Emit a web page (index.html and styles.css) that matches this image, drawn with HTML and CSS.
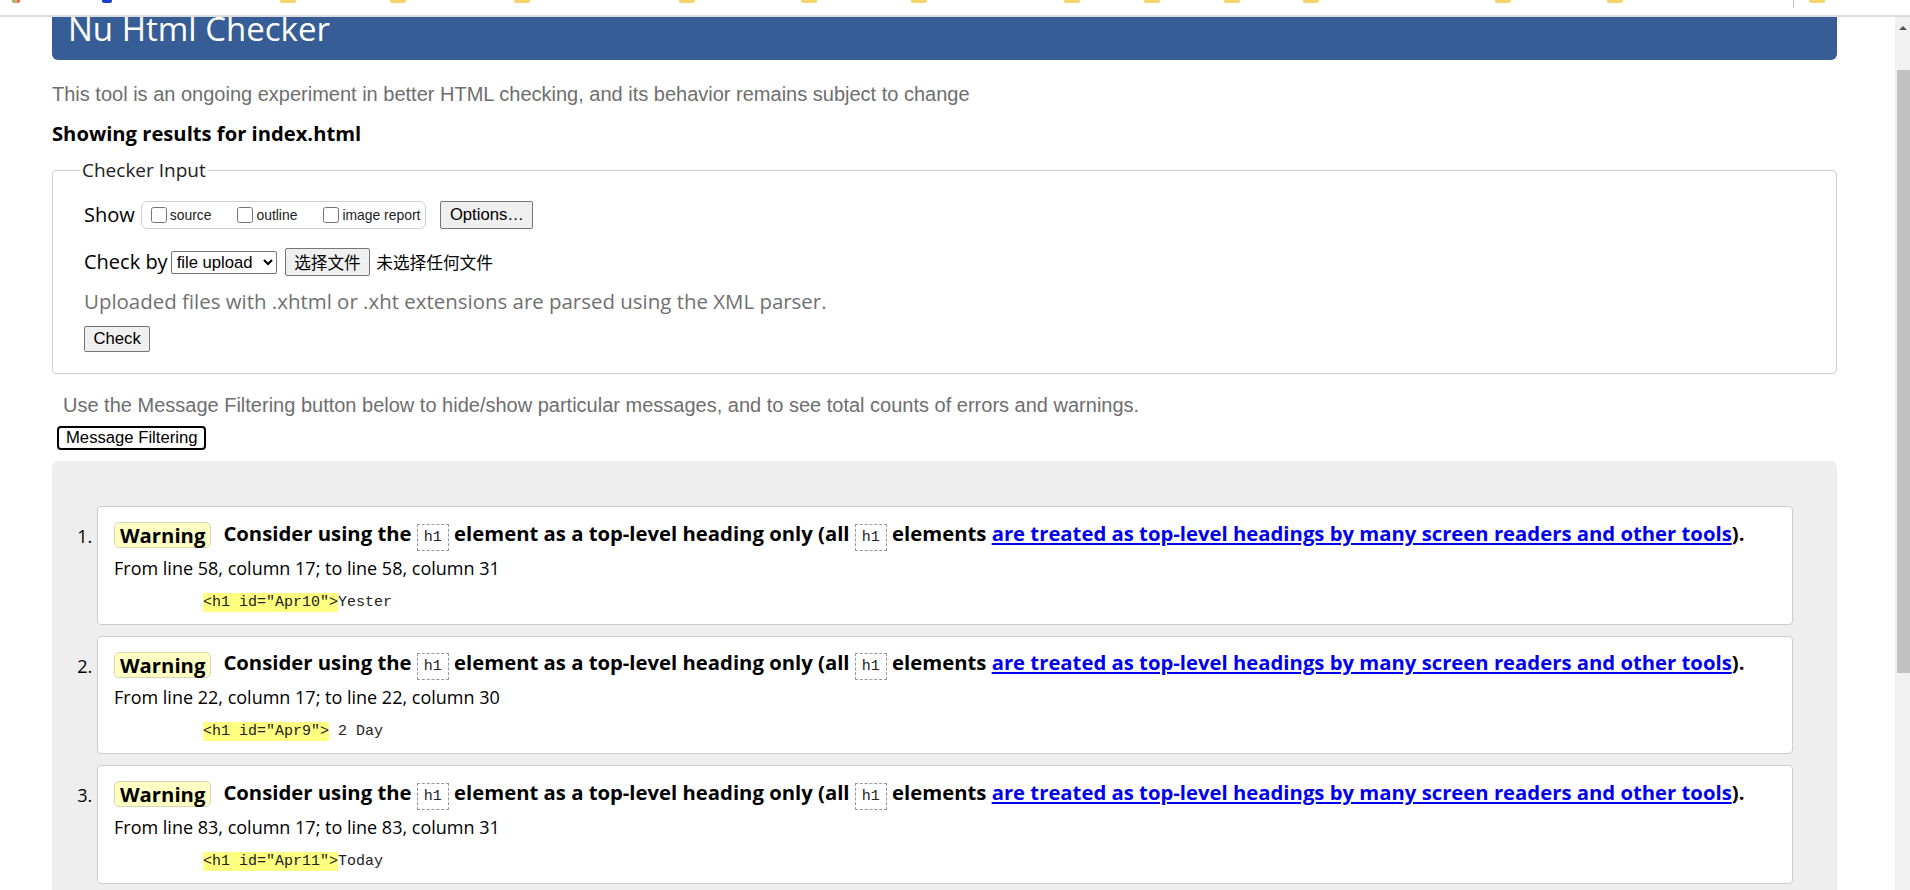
FILE: index.html
```html
<!DOCTYPE html>
<html lang="en">
<head>
<meta charset="utf-8">
<title>Nu Html Checker</title>
<link rel="stylesheet" href="styles.css">
</head>
<body>
<div class="topbar">
  <span class="mark multi" style="margin-left:12px"></span>
  <span class="mark blue" style="margin-left:82px"></span>
  <span class="mark" style="margin-left:168px"></span>
  <span class="mark" style="margin-left:94px"></span>
  <span class="mark" style="margin-left:108px"></span>
  <span class="mark" style="margin-left:149px"></span>
  <span class="mark" style="margin-left:106px"></span>
  <span class="mark" style="margin-left:94px"></span>
  <span class="mark" style="margin-left:137px"></span>
  <span class="mark" style="margin-left:64px"></span>
  <span class="mark" style="margin-left:64px"></span>
  <span class="mark" style="margin-left:63px"></span>
  <span class="mark" style="margin-left:176px"></span>
  <span class="mark" style="margin-left:96px"></span>
  <span class="sep" style="margin-left:170px"></span>
  <span class="mark" style="margin-left:15px"></span>
</div>
<div class="window">
  <div class="viewport">
    <div class="page">
      <h1 class="title">Nu Html Checker</h1>
      <p class="about">This tool is an ongoing experiment in better HTML checking, and its behavior remains subject to change</p>
      <p class="showing">Showing results for index.html</p>
      <fieldset class="checker">
        <legend class="legend">Checker Input</legend>
        <div class="row show-row">
          <span class="label">Show</span>
          <span class="opts">
            <label class="opt"><input type="checkbox">source</label>
            <label class="opt"><input type="checkbox">outline</label>
            <label class="opt"><input type="checkbox">image report</label>
          </span>
          <button class="btn btn-options" type="button">Options…</button>
        </div>
        <div class="row by-row">
          <span class="label">Check by</span>
          <select class="sel"><option>file upload</option></select>
          <button class="btn btn-file" type="button">选择文件</button>
          <span class="nofile">未选择任何文件</span>
        </div>
        <p class="hint">Uploaded files with .xhtml or .xht extensions are parsed using the XML parser.</p>
        <button class="btn btn-check" type="button">Check</button>
      </fieldset>
      <p class="filter-note">Use the Message Filtering button below to hide/show particular messages, and to see total counts of errors and warnings.</p>
      <button class="btn btn-filter" type="button">Message Filtering</button>
      <div class="results">
        <ol class="messages">
          <li class="msg">
            <p class="msg-title"><span class="badge">Warning</span><span class="msg-text">Consider using the <code class="kw">h1</code> element as a top-level heading only (all <code class="kw">h1</code> elements <a href="#" class="link">are treated as top-level headings by many screen readers and other tools</a>).</span></p>
            <p class="loc">From line 58, column 17; to line 58, column 31</p>
            <p class="extract"><code><mark class="hl">&lt;h1 id="Apr10"&gt;</mark>Yester</code></p>
          </li>
          <li class="msg">
            <p class="msg-title"><span class="badge">Warning</span><span class="msg-text">Consider using the <code class="kw">h1</code> element as a top-level heading only (all <code class="kw">h1</code> elements <a href="#" class="link">are treated as top-level headings by many screen readers and other tools</a>).</span></p>
            <p class="loc">From line 22, column 17; to line 22, column 30</p>
            <p class="extract"><code><mark class="hl">&lt;h1 id="Apr9"&gt;</mark> 2 Day</code></p>
          </li>
          <li class="msg">
            <p class="msg-title"><span class="badge">Warning</span><span class="msg-text">Consider using the <code class="kw">h1</code> element as a top-level heading only (all <code class="kw">h1</code> elements <a href="#" class="link">are treated as top-level headings by many screen readers and other tools</a>).</span></p>
            <p class="loc">From line 83, column 17; to line 83, column 31</p>
            <p class="extract"><code><mark class="hl">&lt;h1 id="Apr11"&gt;</mark>Today</code></p>
          </li>
        </ol>
      </div>
    </div>
  </div>
  <div class="scrollbar">
    <div class="sb-arrow"></div>
    <div class="sb-track"><div class="sb-thumb"></div></div>
  </div>
</div>
</body>
</html>
```
FILE: styles.css
```css
* { box-sizing: border-box; }
html, body { margin: 0; padding: 0; height: 100%; background: #fff; overflow: hidden; }
body {
  font-family: "Open Sans", "Noto Sans", "Noto Sans CJK SC", sans-serif;
  color: #000;
  display: flex;
  flex-direction: column;
}
.topbar {
  height: 17px;
  flex: none;
  border-bottom: 2px solid #dadce0;
  display: flex;
  align-items: flex-start;
  background: #fff;
}
.mark {
  width: 16px;
  height: 3px;
  background: #f6d36b;
  border-radius: 0 0 2px 2px;
  flex: none;
}
.mark.multi { width: 8px; background: linear-gradient(90deg,#7cc57c 0 33%,#f3b04a 33% 66%,#e86b5c 66%); }
.mark.blue { width: 10px; background: #1a3fd0; }
.sep { width: 1px; height: 8px; background: #c8c8c8; flex: none; }

.window { flex: 1; display: flex; min-height: 0; }
.viewport { flex: 1; overflow: hidden; }
.scrollbar {
  width: 15px;
  flex: none;
  background: #f1f1f1;
  display: flex;
  flex-direction: column;
}
.sb-arrow {
  height: 17px;
  display: flex;
  justify-content: center;
  align-items: center;
}
.sb-arrow::before {
  content: "";
  border-left: 4px solid transparent;
  border-right: 4px solid transparent;
  border-bottom: 4px solid #505050;
  margin-top: 4px;
}
.sb-track { flex: 1; padding: 36px 0 0 2px; }
.sb-thumb { width: 13px; height: 603px; background: #c1c1c1; }

.page {
  padding: 0 58px 0 52px;
  margin-top: -14px;
}
.title {
  margin: 0;
  background: #365d95;
  color: #fff;
  font-weight: normal;
  font-size: 33px;
  line-height: 24px;
  padding: 14px 16px 19px;
  border-radius: 0 0 6px 6px;
}
.about {
  margin: 23px 0 0;
  font-family: "Liberation Sans", Arial, sans-serif;
  font-size: 20px;
  line-height: 23px;
  color: #6e6e6e;
}
.showing {
  margin: 14px 0 0;
  font-weight: bold;
  font-size: 20.2px;
  line-height: 27px;
}
.checker {
  margin: 12px 0 0;
  border: 1px solid #cfcfcf;
  border-radius: 4px;
  padding: 19px 30px 21px 31px;
}
.legend {
  font-size: 19px;
  padding: 0 2px;
  margin-left: -4px;
  line-height: 23px;
  color: #222;
}
.row { display: flex; align-items: center; }
.label { font-size: 20px; line-height: 28px; }
.opts {
  margin-left: 6px;
  border: 1px solid #cfcfcf;
  border-radius: 6px;
  height: 28px;
  display: flex;
  align-items: center;
  padding: 0 5px 0 9px;
}
.opt {
  font-family: "Liberation Sans", Arial, sans-serif;
  font-size: 13.9px;
  display: flex;
  align-items: center;
  margin-right: 26px;
  color: #222;
}
.opt:last-child { margin-right: 0; }
.opt input { margin: 0 3px 0 0; width: 16px; height: 16px; }
.btn {
  font-family: "Liberation Sans", Arial, sans-serif;
  font-size: 16.67px;
  background: #efefef;
  border: 1px solid #767676;
  border-radius: 2px;
  color: #000;
  margin: 0;
}
.btn-options { margin-left: 14px; height: 28px; padding: 0 8.5px; }
.by-row { margin-top: 19px; }
.sel {
  margin-left: 3px;
  width: 106px;
  font-family: "Liberation Sans", Arial, sans-serif;
  font-size: 16.67px;
  height: 23px;
  border: 1px solid #767676;
  border-radius: 2px;
  background: #fff;
  color: #000;
  padding: 0 0 0 1px;
}
.btn-file {
  margin-left: 8px;
  font-family: "Noto Sans CJK SC", sans-serif;
  height: 28px;
  padding: 0 8.5px;
}
.nofile {
  margin-left: 6px;
  font-family: "Noto Sans CJK SC", sans-serif;
  font-size: 16.67px;
}
.hint {
  margin: 12px 0 0;
  font-size: 20.45px;
  line-height: 26px;
  color: #707070;
}
.btn-check { margin-top: 12px; height: 26px; padding: 0 8.5px; }
.filter-note {
  margin: 20px 0 0 11px;
  font-family: "Liberation Sans", Arial, sans-serif;
  font-size: 20px;
  line-height: 23px;
  color: #6e6e6e;
}
.btn-filter {
  margin: 9px 0 0 5px;
  height: 24px;
  border: 2px solid #000;
  border-radius: 4px;
  background: #fff;
  padding: 0 7px;
}
.results {
  margin-top: 11px;
  background: #eee;
  border-radius: 6px 6px 0 0;
  padding: 45px 44px 20px 45px;
}
.messages { margin: 0; padding: 0; font-size: 18px; }
.msg {
  background: #fff;
  border: 1px solid #ccc;
  border-radius: 4px;
  padding: 11.5px 16px 11px;
  margin-bottom: 11px;
}
.msg::marker { font-size: 18px; }
.msg-title {
  margin: 0;
  font-weight: bold;
  font-size: 20.3px;
  line-height: 28px;
  display: flex;
  align-items: center;
}
.badge {
  background: #ffffc4;
  border: 1px solid #d6d6b0;
  border-radius: 5px;
  padding: 0 5px;
  line-height: 24px;
  margin-right: 12px;
  flex: none;
}
.kw {
  font-family: "Liberation Mono", monospace;
  font-weight: normal;
  font-size: 15px;
  border: 1px dashed #999;
  padding: 4px 6px;
  color: #222;
}
.link { color: #0000ee; }
.loc { margin: 3px 0 0; font-size: 18px; line-height: 26px; }
.extract { margin: 9px 0 0 89px; font-size: 15px; line-height: 20px; }
.extract code { font-family: "Liberation Mono", monospace; color: #222; }
.hl { background: #ffff80; color: #222; padding: 1px 0; }
```
